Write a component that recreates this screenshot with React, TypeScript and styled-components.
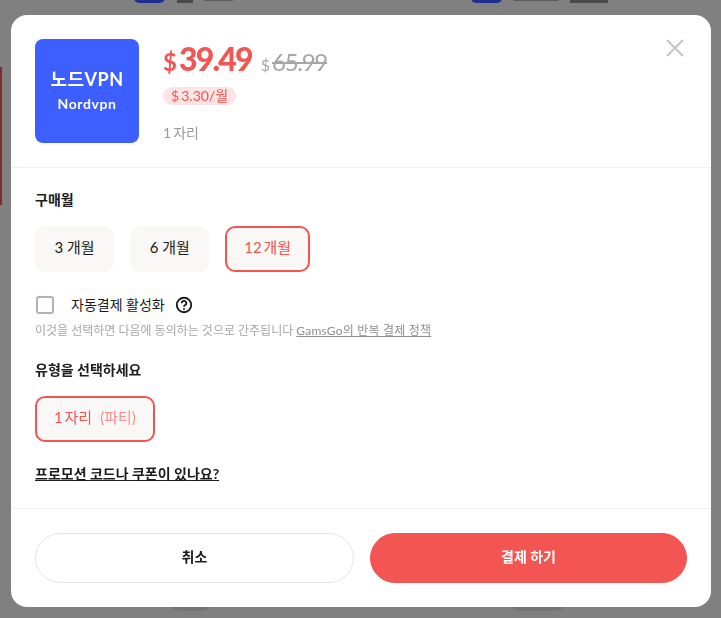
import styled, { createGlobalStyle } from 'styled-components'

const fontStack = `Lato, 'Noto Sans CJK KR', sans-serif`

const GlobalStyle = createGlobalStyle`
  * {
    box-sizing: border-box;
  }

  html,
  body {
    margin: 0;
    padding: 0;
    height: 100%;
    overflow: hidden;
    background: #808080;
    font-family: ${fontStack};
  }
`

/* page behind the dialog, only scraps of it stay visible */
const BackPage = styled.div`
  height: 100vh;
  display: grid;
  grid-template-columns: 1fr 1fr;
  gap: 5px;
  padding: 0 26px 7px;
  background: #808080;
`

const BackColumn = styled.div`
  display: flex;
  flex-direction: column;
  justify-content: space-between;
  padding-left: 108px;
`

const BackTitle = styled.div`
  display: flex;
  gap: 12px;
  height: 3px;
  overflow: hidden;
`

const BackChip = styled.div`
  width: 31px;
  height: 12px;
  margin-top: -9px;
  border-radius: 0 0 5px 5px;
  background: #1f2f8f;
`

const BackBar = styled.div<{ $width: number; $thin?: boolean }>`
  width: ${p => p.$width}px;
  height: ${p => (p.$thin ? '1px' : '3px')};
  background: ${p => (p.$thin ? '#5c5c5c' : '#4a4a4a')};
`

const BackBump = styled.div<{ $wide?: boolean }>`
  width: ${p => (p.$wide ? '58px' : '44px')};
  height: 11px;
  margin-left: ${p => (p.$wide ? '38px' : '34px')};
  border-radius: 0 0 12px 12px;
  background: #757575;
`

const BackStripe = styled.div`
  position: fixed;
  left: 0;
  top: 67px;
  width: 2px;
  height: 138px;
  background: #7c2e2e;
`

const Overlay = styled.div`
  position: fixed;
  inset: 0;
  display: flex;
  padding: 15px 10px 11px 11px;
`

const Modal = styled.div`
  flex: 1;
  display: flex;
  flex-direction: column;
  border-radius: 16px;
  background: #fff;
  color: #1c1c1c;
`

const Header = styled.header`
  position: relative;
  display: flex;
  gap: 24px;
  height: 153px;
  padding: 24px 24px 0;
  border-bottom: 1px solid #f1f1f1;
`

const Logo = styled.div`
  width: 104px;
  height: 104px;
  display: flex;
  flex-direction: column;
  align-items: center;
  justify-content: center;
  gap: 6px;
  padding-bottom: 3px;
  border-radius: 8px;
  background: #3d5fff;
  color: #fff;
`

const LogoTitle = styled.div`
  font-size: 18px;
  font-weight: 700;
  line-height: 22px;
  letter-spacing: 0.5px;
`

const LogoSub = styled.div`
  font-size: 14px;
  font-weight: 700;
  line-height: 16px;
  letter-spacing: 0.6px;
`

const Summary = styled.div`
  display: flex;
  flex-direction: column;
  align-items: flex-start;
`

const PriceRow = styled.div`
  display: flex;
  align-items: baseline;
  height: 42px;
`

const Currency = styled.span<{ $old?: boolean }>`
  font-size: ${p => (p.$old ? '16px' : '24px')};
  font-weight: ${p => (p.$old ? 400 : 700)};
  color: ${p => (p.$old ? '#a6a6a6' : '#f25552')};
  margin-right: ${p => (p.$old ? '2px' : '2px')};
`

const Price = styled.span`
  font-size: 32px;
  font-weight: 900;
  letter-spacing: -1.8px;
  color: #f25552;
  margin-right: 9px;
`

const OldPrice = styled.span`
  font-size: 24px;
  letter-spacing: -1.3px;
  color: #a6a6a6;
  text-decoration: line-through;
`

const PerMonth = styled.div`
  height: 18px;
  margin-top: 6px;
  padding: 0 8px;
  border-radius: 9px;
  background: #fde4e4;
  color: #f25552;
  font-size: 14px;
  line-height: 18px;
  word-spacing: -1.5px;
`

const Seats = styled.div`
  margin-top: 19px;
  font-size: 14px;
  line-height: 18px;
  word-spacing: -1.5px;
  color: #999;
`

const CloseButton = styled.button`
  position: absolute;
  top: 22px;
  right: 25px;
  width: 22px;
  height: 22px;
  padding: 0;
  border: 0;
  background: none;
  color: #c4c4c4;
`

const Body = styled.div`
  flex: 1;
  display: flex;
  flex-direction: column;
  align-items: flex-start;
  padding: 22px 24px 0;
  border-bottom: 1px solid #f1f1f1;
`

const Label = styled.div`
  font-size: 14px;
  font-weight: 700;
  line-height: 20px;
`

const Options = styled.div`
  display: flex;
  gap: 16px;
  margin-top: 16px;
`

const Option = styled.button<{ $active?: boolean }>`
  height: 46px;
  padding: 0 ${p => (p.$active ? '17px' : '17.5px')} 5px;
  border: 2px solid ${p => (p.$active ? '#f25552' : 'transparent')};
  border-radius: 10px;
  background: #faf8f6;
  color: ${p => (p.$active ? '#f25552' : '#1c1c1c')};
  font-family: inherit;
  font-size: 15px;
  word-spacing: ${p => (p.$active ? '-2px' : '0')};
`

const Muted = styled.span`
  margin-left: 8px;
  color: #fa8c8c;
`

const AutoRow = styled.label`
  display: flex;
  align-items: center;
  margin-top: 23px;
  margin-left: 1px;
  font-size: 14px;
  line-height: 20px;
`

const CheckBox = styled.span`
  width: 18px;
  height: 18px;
  margin-right: 17px;
  border: 2px solid #b8b0ae;
  border-radius: 3px;
`

const HelpIcon = styled.svg`
  width: 18px;
  height: 18px;
  margin-left: 10px;
`

const Note = styled.div`
  margin-top: 7px;
  font-size: 12px;
  line-height: 18px;
  color: #a6a6a6;

  a {
    color: #8f8f8f;
    letter-spacing: 0.2px;
    text-decoration: underline;
  }
`

const TypeLabel = styled(Label)`
  margin-top: 20px;
`

const PromoLink = styled.a`
  margin-top: 22px;
  font-size: 14px;
  font-weight: 700;
  line-height: 20px;
  color: #1c1c1c;
  text-decoration: underline;
`

const Footer = styled.footer`
  display: flex;
  gap: 16px;
  padding: 24px;
`

const ActionButton = styled.button<{ $primary?: boolean }>`
  flex: 1 1 ${p => (p.$primary ? '317px' : '319px')};
  height: 50px;
  padding: 0 0 5px;
  border: 1px solid ${p => (p.$primary ? '#f25552' : '#e4e4e4')};
  border-radius: 25px;
  background: ${p => (p.$primary ? '#f25552' : '#fff')};
  color: ${p => (p.$primary ? '#fff' : '#1c1c1c')};
  font-family: inherit;
  font-size: 14px;
  font-weight: 700;
`

function App() {
  return (
    <>
      <GlobalStyle />
      <BackPage>
        <BackColumn>
          <BackTitle>
            <BackChip />
            <BackBar $width={16} />
            <BackBar $width={28} $thin />
          </BackTitle>
          <BackBump />
        </BackColumn>
        <BackColumn>
          <BackTitle>
            <BackChip />
            <BackBar $width={44} $thin />
            <BackBar $width={38} />
          </BackTitle>
          <BackBump $wide />
        </BackColumn>
      </BackPage>
      <BackStripe />
      <Overlay>
        <Modal>
          <Header>
            <Logo>
              <LogoTitle>노드VPN</LogoTitle>
              <LogoSub>Nordvpn</LogoSub>
            </Logo>
            <Summary>
              <PriceRow>
                <Currency>$</Currency>
                <Price>39.49</Price>
                <Currency $old>$</Currency>
                <OldPrice>65.99</OldPrice>
              </PriceRow>
              <PerMonth>$ 3.30/월</PerMonth>
              <Seats>1 자리</Seats>
            </Summary>
            <CloseButton aria-label="닫기">
              <svg width="22" height="22" viewBox="0 0 22 22" fill="none" stroke="currentColor" strokeWidth="2">
                <path d="M3 3l16 16M19 3L3 19" />
              </svg>
            </CloseButton>
          </Header>
          <Body>
            <Label>구매월</Label>
            <Options>
              <Option>3 개월</Option>
              <Option>6 개월</Option>
              <Option $active>12 개월</Option>
            </Options>
            <AutoRow>
              <CheckBox />
              자동결제 활성화
              <HelpIcon viewBox="0 0 18 18" fill="none" stroke="#1c1c1c">
                <circle cx="9" cy="9" r="7.2" strokeWidth="1.9" />
                <path d="M6.7 7.2a2.3 2.3 0 1 1 3.5 1.9c-.8.5-1.2.9-1.2 1.6" strokeWidth="1.8" />
                <circle cx="9" cy="12.9" r="1" fill="#1c1c1c" stroke="none" />
              </HelpIcon>
            </AutoRow>
            <Note>
              이것을 선택하면 다음에 동의하는 것으로 간주됩니다 <a href="#policy">GamsGo의 반복 결제 정책</a>
            </Note>
            <TypeLabel>유형을 선택하세요</TypeLabel>
            <Options>
              <Option $active>
                1 자리<Muted>(파티)</Muted>
              </Option>
            </Options>
            <PromoLink href="#promo">프로모션 코드나 쿠폰이 있나요?</PromoLink>
          </Body>
          <Footer>
            <ActionButton>취소</ActionButton>
            <ActionButton $primary>결제 하기</ActionButton>
          </Footer>
        </Modal>
      </Overlay>
    </>
  )
}

export default App
